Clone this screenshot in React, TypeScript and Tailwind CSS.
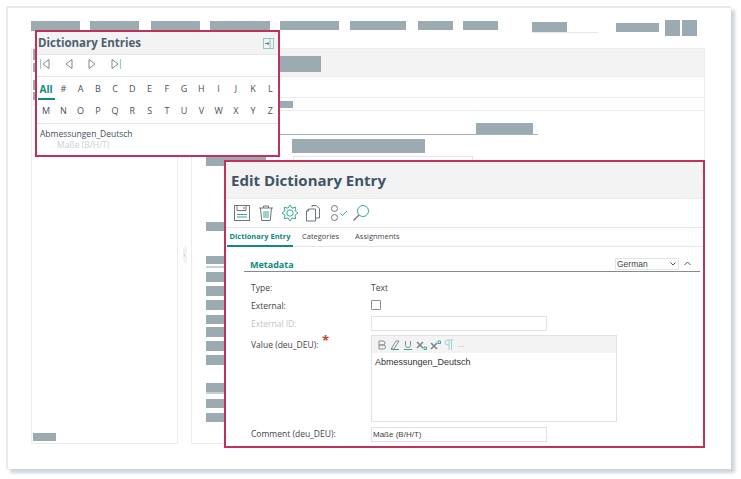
const Bar = ({ c }: { c: string }) => <div className={`bg-[#9cabb1] ${c}`} />;

const Tri = ({ dir, stop }: { dir: "l" | "r"; stop?: boolean }) => (
  <svg width="14" height="14" viewBox="0 0 14 14" fill="none">
    {dir === "l" ? (
      <>
        {stop && <path d="M1.5 2v10" stroke="#8fd0cc" strokeWidth="1.2" />}
        <path d="M10 2.5v9L4 7z" stroke="#80888c" strokeWidth="1" />
      </>
    ) : (
      <>
        <path d="M4 2.5v9L10 7z" stroke="#80888c" strokeWidth="1" />
        {stop && <path d="M12.5 2v10" stroke="#8fd0cc" strokeWidth="1.2" />}
      </>
    )}
  </svg>
);

const row1 = ["All", "#", "A", "B", "C", "D", "E", "F", "G", "H", "I", "J", "K", "L"];
const row2 = ["M", "N", "O", "P", "Q", "R", "S", "T", "U", "V", "W", "X", "Y", "Z"];

const Letters = ({ items }: { items: string[] }) => (
  <div className="grid grid-cols-[repeat(14,17.25px)] h-[22px] items-center text-center text-[9px] text-[#46505a]">
    {items.map((l) =>
      l === "All" ? (
        <div key={l} className="h-[22px] pt-[5px] leading-[12px] border-b-2 border-[#0f8a80] text-[10px] font-bold text-[#0f8a80]">
          {l}
        </div>
      ) : (
        <div key={l}>{l}</div>
      ),
    )}
  </div>
);

const Field = ({ label, muted, h, children }: { label: string; muted?: boolean; h: string; children?: React.ReactNode }) => (
  <div className={`flex ${h}`}>
    <div className={`w-[121px] pt-[1px] pl-[1px] text-[8.5px] leading-[12px] ${muted ? "text-[#c4c4c4]" : "text-[#3f4448]"}`}>{label}</div>
    {children}
  </div>
);

const Input = ({ v }: { v?: string }) => (
  <div className="w-[176px] h-[15px] border border-[#dfe3e3] bg-white pl-[1px] text-[8px] leading-[14px] text-[#444] font-['Liberation_Sans',sans-serif]">{v}</div>
);

const stroke = "#6f7578";
const teal = "#3aa79f";

const ToolIcons = () => (
  <div className="flex items-center h-[28px] pl-[7px] gap-[6px]">
    <svg width="18" height="18" viewBox="0 0 18 18" fill="none" stroke={stroke}>
      <rect x="1.5" y="1.5" width="15" height="15" />
      <path d="M4 1.5v5h9v-5M11 3v2" />
      <path d="M4 10.5h10M4 13h10" stroke={teal} />
    </svg>
    <svg width="18" height="18" viewBox="0 0 18 18" fill="none" stroke={stroke}>
      <path d="M2 4h14M6.5 4V2h5v2M3.5 4l1.2 12.5h8.6L14.5 4" />
      <path d="M7 7v7M9 7v7M11 7v7" stroke={teal} />
    </svg>
    <svg width="18" height="18" viewBox="0 0 18 18" fill="none" stroke={teal}>
      <path d="M9 1l2 3.2 3.6-1-.5 3.7L17 9l-2.9 2.1.5 3.7-3.6-1L9 17l-2-3.2-3.6 1 .5-3.7L1 9l2.9-2.1-.5-3.7 3.6 1z" />
      <circle cx="9" cy="9" r="3.2" />
    </svg>
    <svg width="18" height="18" viewBox="0 0 18 18" fill="none" stroke={stroke}>
      <path d="M3.5 5h7v12h-9V7zM3.5 5v2h-2" />
      <path d="M7 3V1.5h4l3.5 3V14h-4" />
    </svg>
    <svg width="18" height="18" viewBox="0 0 18 18" fill="none" className="ml-[1px]">
      <circle cx="4.5" cy="4.5" r="3" stroke={stroke} />
      <circle cx="4.5" cy="13.5" r="3" stroke={stroke} />
      <path d="M10.5 9.5l2 2L17 7" stroke={teal} />
    </svg>
    <svg width="18" height="18" viewBox="0 0 18 18" fill="none" className="ml-[-2px]">
      <circle cx="11" cy="7" r="5.5" stroke={teal} />
      <path d="M7 11l-5.5 5.5" stroke={stroke} strokeWidth="1.2" />
    </svg>
  </div>
);

const EditorIcons = () => (
  <div className="h-[17px] bg-[#f3f3f3] flex items-center pl-[5px] gap-[3px] text-[10px] leading-none">
    <svg width="10" height="10" viewBox="0 0 10 10" fill="none" stroke="#8a9094"><path d="M2 1h4q2 0 2 2t-2 2H2zM2 5h4.500q2 0 2 2t-2 2H2z" /></svg>
    <svg width="10" height="10" viewBox="0 0 10 10" fill="none" stroke="#8a9094"><path d="M6 1h3L4 9H1z" /><path d="M1 9.500h8" stroke={teal} /></svg>
    <svg width="10" height="10" viewBox="0 0 10 10" fill="none" stroke="#8a9094"><path d="M2.500 1v4.500q0 2 2.500 2t2.500-2V1" /><path d="M1 9.500h8" stroke={teal} /></svg>
    <svg width="11" height="10" viewBox="0 0 11 10" fill="none" stroke="#7f8588"><path d="M1 2l6 6M7 2L1 8" strokeWidth="1.600" /><path d="M8 7h2.500v2.500H8z" stroke={teal} /></svg>
    <svg width="11" height="10" viewBox="0 0 11 10" fill="none" stroke="#7f8588"><path d="M1 3l6 6M7 3L1 9" strokeWidth="1.600" /><path d="M8 1h2.500v2.500H8z" stroke={teal} /></svg>
    <svg width="10" height="11" viewBox="0 0 10 11" fill="none" stroke="#9ad6d2"><path d="M5 1v10M7.500 1v10M9.500 1H4Q1 1 1 3.500T4 6h1" /></svg>
    <span className="text-[#a8acae] text-[8px] ml-[1px] pb-[2px]">...</span>
  </div>
);

export default function App() {
  return (
    <div className="relative w-[741px] h-[479px] bg-white overflow-hidden font-['Open_Sans',sans-serif]">
      {/* page card */}
      <div className="ml-[6px] mt-[6px] w-[725px] h-[463px] bg-white border-t-2 border-l-2 border-[#e6ebec] shadow-[4px_4px_3px_#cfd6da] pl-[23px] pt-[13px]">
        <div className="flex h-[27px] relative">
          <Bar c="w-[49px] h-[10px] mr-[10px]" />
          <Bar c="w-[49px] h-[10px] mr-[12px]" />
          <Bar c="w-[49px] h-[9px] mr-[10px]" />
          <Bar c="w-[60px] h-[9px] mr-[10px]" />
          <Bar c="w-[59px] h-[9px] mr-[11px]" />
          <Bar c="w-[56px] h-[9px] mr-[12px]" />
          <Bar c="w-[35px] h-[9px] mr-[10px]" />
          <Bar c="w-[35px] h-[9px] mr-[34px]" />
          <div className="w-[66px] h-[11px] mt-[1px] mr-[18px] border-b border-[#e8e8e8]">
            <Bar c="w-[35px] h-[10px]" />
          </div>
          <Bar c="w-[43px] h-[9px] mt-[2px] mr-[6px]" />
          <Bar c="w-[15px] h-[16px] mt-[-1px] mr-[2px]" />
          <Bar c="w-[15px] h-[16px] mt-[-1px]" />
        </div>

        <div className="flex h-[396px]">
          {/* left panel */}
          <div className="w-[147px] border border-[#ececec] flex flex-col justify-between">
            <div className="pl-[1px] flex flex-col">
              <Bar c="w-[6px] h-[11px]" />
              <Bar c="w-[6px] h-[9px] mt-[3px]" />
              <Bar c="w-[6px] h-[10px] mt-[8px]" />
              <Bar c="w-[6px] h-[8px] mt-[2px]" />
            </div>
            <div className="pl-[1px] pb-[2px]">
              <Bar c="w-[23px] h-[8px]" />
            </div>
          </div>

          {/* splitter */}
          <div className="w-[13px] flex justify-center items-start pt-[199px]">
            <div className="w-[4px] h-[16px] bg-[#f2f2f2] rounded-[2px] flex items-center justify-center text-[6px] leading-none text-[#888]">‹</div>
          </div>

          {/* right panel */}
          <div className="w-[514px] border border-[#ececec]">
            <div className="h-[28px] bg-[#f3f3f3] border-b border-[#ececec] pl-[44px] pt-[7px]">
              <Bar c="w-[85px] h-[16px]" />
            </div>
            <div className="h-[21px] border-b border-[#ececec]" />
            <div className="h-[13px] border-b border-[#ececec] pl-[60px] pt-[3px]">
              <Bar c="w-[41px] h-[7px]" />
            </div>
            <div className="pl-[14px]">
              <div className="w-[332px] h-[24px] border-b border-[#a4b1b6] flex justify-end items-end pr-[5px]">
                <Bar c="w-[57px] h-[11px]" />
              </div>
              <div className="pl-[86px] pt-[4px]">
                <Bar c="w-[133px] h-[14px]" />
              </div>
              <div className="flex h-[10px] mt-[3px]">
                <Bar c="w-[60px] h-[9px] mt-[1px] mr-[27px]" />
                <div className="w-[180px] h-[6px] border border-[#e4e7e8]" />
              </div>
              <Bar c="w-[60px] h-[9px] mt-[56px]" />
              <div className="w-[60px] h-[12px] mt-[25px] border-b-2 border-[#c9d0d3]">
                <Bar c="w-[60px] h-[8px]" />
              </div>
              <Bar c="w-[60px] h-[10px] mt-[4px]" />
              <Bar c="w-[60px] h-[10px] mt-[4px]" />
              <Bar c="w-[60px] h-[10px] mt-[4px]" />
              <Bar c="w-[60px] h-[9px] mt-[5px]" />
              <Bar c="w-[60px] h-[10px] mt-[3px]" />
              <Bar c="w-[60px] h-[10px] mt-[4px]" />
              <Bar c="w-[60px] h-[10px] mt-[4px]" />
              <div className="w-[60px] h-[11px] mt-[18px] border-b-2 border-[#c9d0d3]">
                <Bar c="w-[60px] h-[9px]" />
              </div>
              <Bar c="w-[60px] h-[9px] mt-[5px]" />
              <Bar c="w-[60px] h-[9px] mt-[5px]" />
            </div>
          </div>
        </div>
      </div>

      {/* Dictionary Entries callout */}
      <div className="absolute left-[35px] top-[30px] w-[245px] h-[127px] border-2 border-[#c0325a] bg-white">
        <div className="h-[23px] bg-[#f3f3f3] border-b border-[#e6e6e6] flex items-center justify-between pl-[1px] pr-[4px]">
          <span className="text-[11.5px] font-bold text-[#4d6170] leading-none">Dictionary Entries</span>
          <svg width="11" height="11" viewBox="0 0 11 11" fill="none">
            <rect x="0.500" y="0.500" width="10" height="10" stroke="#8fc9c6" />
            <path d="M7 1v9" stroke="#8fc9c6" />
            <path d="M2 5.500h4M4.500 4l1.500 1.500L4.500 7" stroke="#6f8488" />
          </svg>
        </div>
        <div className="h-[22px] border-b border-[#e6e6e6] flex items-start pl-[2px] pt-[2px] gap-[9px]">
          <Tri dir="l" stop />
          <Tri dir="l" />
          <Tri dir="r" />
          <Tri dir="r" stop />
        </div>
        <div className="border-b border-[#e6e6e6] h-[47px] pl-[0.5px] pt-[1px]">
          <Letters items={row1} />
          <Letters items={row2} />
        </div>
        <div className="pl-[3px] pt-[4px] text-[8.5px] leading-[11px] text-[#46505a]">
          <div>Abmessungen_Deutsch</div>
          <div className="pl-[17px] text-[#cfcfcf]">Maße (B/H/T)</div>
        </div>
      </div>

      {/* Edit Dictionary Entry callout */}
      <div className="absolute left-[224px] top-[160px] w-[481px] h-[288px] border-2 border-[#c0325a] bg-white">
        <div className="h-[37px] bg-[#f3f3f3] border-b border-[#ececec] flex items-center pl-[5px]">
          <span className="text-[15px] font-bold text-[#3f5566] leading-none">Edit Dictionary Entry</span>
        </div>
        <ToolIcons />
        <div className="h-[20px] border-y border-[#e6e6e6] border-t-[#e6e6e6] flex items-center text-[7.5px] text-[#3f4448]">
          <div className="w-[66px] ml-[1px] h-[19px] border-b-2 border-[#0f8a80] text-center leading-[17px] font-bold text-[#0f8a80]">Dictionary Entry</div>
          <div className="ml-[9px]">Categories</div>
          <div className="ml-[16px]">Assignments</div>
        </div>
        <div className="pl-[18px] pr-[3px] pt-[11px]">
          <div className="h-[14px] border-b border-[#7f8c92] flex justify-between items-start pl-[6px] pr-[9px]">
            <span className="text-[9px] font-bold text-[#0f8a80] leading-[13px]">Metadata</span>
            <div className="flex items-start">
              <div className="w-[64px] h-[12px] border border-[#e4e6e6] flex items-center justify-between pl-[1px] pr-[2px] text-[8.500px] leading-none text-[#444] font-['Liberation_Sans',sans-serif]">
                <span>German</span>
                <svg width="6" height="4" viewBox="0 0 6 4" fill="none" stroke="#555"><path d="M0.500 0.500L3 3l2.500-2.500" /></svg>
              </div>
              <svg className="ml-[5px] mt-[3px]" width="7" height="5" viewBox="0 0 7 5" fill="none" stroke="#555"><path d="M0.500 4L3.500 1l3 3" /></svg>
            </div>
          </div>
          <div className="pl-[6px] pt-[9px]">
            <Field label="Type:" h="h-[18px]">
              <span className="text-[8.500px] leading-[13px] text-[#444]">Text</span>
            </Field>
            <Field label="External:" h="h-[18px]">
              <div className="w-[10px] h-[10px] border border-[#8d8d95] rounded-[1px] mt-[1px]" />
            </Field>
            <Field label="External ID:" muted h="h-[21px]">
              <div className="mt-[-1px]"><Input /></div>
            </Field>
            <Field label="Value (deu_DEU):" h="h-[89px]">
              <div className="w-[246px] h-[87px] border border-[#dfe3e3] mt-[-3px] relative">
                <EditorIcons />
                <div className="pl-[3px] pt-[3px] text-[9px] leading-[12px] text-[#333] font-['Liberation_Sans',sans-serif]">Abmessungen_Deutsch</div>
                <span className="absolute left-[-50px] top-[-2px] text-[13px] font-bold leading-[13px] text-[#c2452d]">*</span>
              </div>
            </Field>
            <Field label="Comment  (deu_DEU):" h="h-[15px]">
              <Input v="Maße (B/H/T)" />
            </Field>
          </div>
        </div>
      </div>
    </div>
  );
}
